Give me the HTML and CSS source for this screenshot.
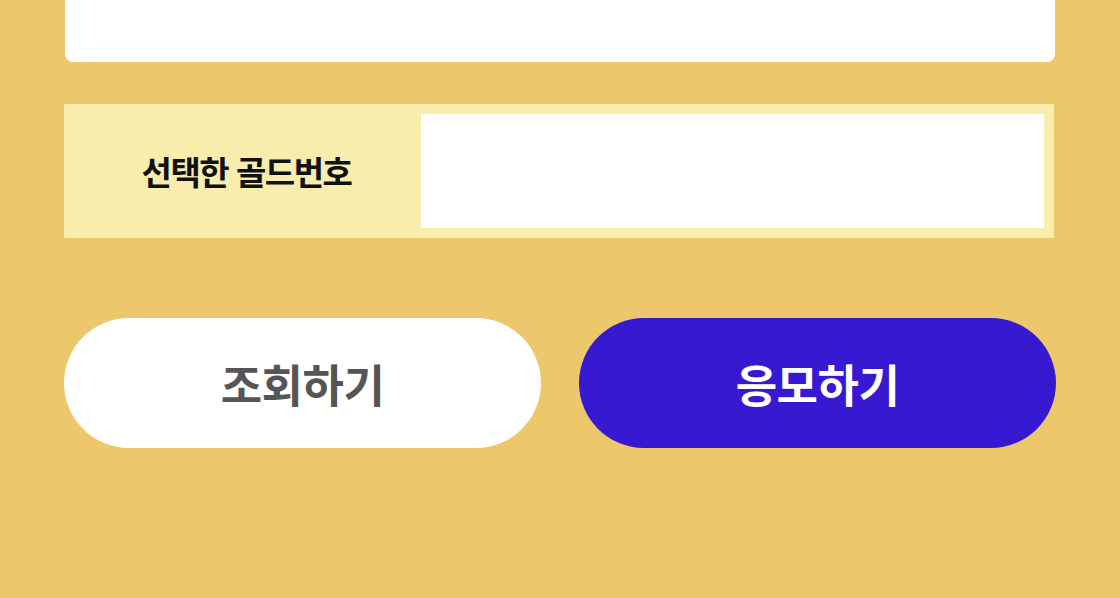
FILE: index.html
```html
<!DOCTYPE html>
<html lang="ko">
<head>
<meta charset="utf-8">
<link rel="stylesheet" href="styles.css">
</head>
<body>
<div class="page">
  <div class="top-box"></div>
  <div class="select-row">
    <div class="select-label">선택한 골드번호</div>
    <div class="select-input"></div>
  </div>
  <div class="buttons">
    <button class="btn btn-check">조회하기</button>
    <button class="btn btn-apply">응모하기</button>
  </div>
</div>
</body>
</html>
```

FILE: styles.css
```css
html, body {
  margin: 0;
  padding: 0;
  background: #EDC76B;
}
.page {
  width: 1120px;
  height: 598px;
  overflow: hidden;
  box-sizing: border-box;
  padding: 0 64px 0 64px;
  font-family: "Noto Sans CJK KR", "Noto Sans", sans-serif;
}
.top-box {
  height: 62px;
  margin: 0 1px 0 1px;
  background: #fff;
  border-radius: 0 0 8px 8px;
}
.select-row {
  margin-top: 42px;
  width: 990px;
  height: 134px;
  background: #F8EDAD;
  display: flex;
  box-sizing: border-box;
  padding: 10px 10px 10px 0;
}
.select-label {
  width: 357px;
  display: flex;
  align-items: center;
  justify-content: center;
  padding-left: 8px;
  box-sizing: border-box;
  font-size: 33px;
  font-weight: 700;
  letter-spacing: -1.5px;
  color: #111;
}
.select-input {
  flex: 1;
  background: #fff;
}
.buttons {
  margin-top: 80px;
  display: flex;
  gap: 38px;
}
.btn {
  width: 477px;
  height: 130px;
  border: none;
  border-radius: 65px;
  font-family: "Noto Sans CJK KR", "Noto Sans", sans-serif;
  font-size: 45px;
  font-weight: 700;
  letter-spacing: -0.5px;
  padding: 0;
}
.btn-check {
  background: #fff;
  color: #555;
}
.btn-apply {
  background: #3619D0;
  color: #fff;
}
```
